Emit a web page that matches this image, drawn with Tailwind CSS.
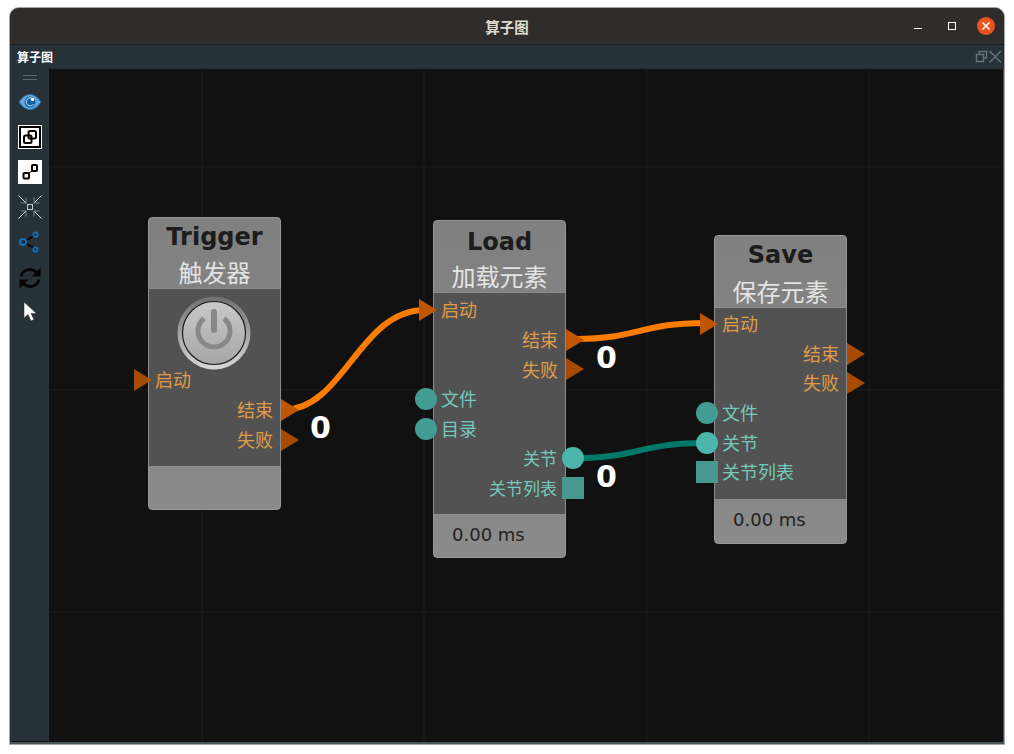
<!DOCTYPE html>
<html><head><meta charset="utf-8"><script src="https://cdn.jsdelivr.net/npm/@tailwindcss/browser@4"></script></head>
<body class="m-0 bg-white">
<div class="w-[1014px] h-[754px] overflow-hidden bg-white pl-[9px] pt-[7px] font-['DejaVu_Sans','Noto_Sans_CJK_SC',sans-serif]">
<div class="w-[996px] h-[738px] flex flex-col rounded-t-[10px] overflow-hidden border border-[#a3a7a9] bg-[#263238]">
  <div class="relative h-[37px] shrink-0 pt-[1px] bg-[#2f2d2c] border-b border-[#1c1c1c] flex items-center justify-center">
    <span class="text-[14.500px] font-bold text-[#dfdbd2] font-['Noto_Sans_CJK_SC',sans-serif]">算子图</span>
    <svg class="absolute left-[900px] top-[0px]" width="94" height="36" viewBox="0 0 94 36">
      <path d="M4 20.500H12" stroke="#fff" stroke-width="1"/>
      <rect x="38.500" y="14.500" width="7" height="7" fill="none" stroke="#fff" stroke-width="1"/>
      <circle cx="76" cy="18" r="9" fill="#e95420"/>
      <path d="M72.500 14.500L79.500 21.500M79.500 14.500L72.500 21.500" stroke="#fff" stroke-width="1.500"/>
    </svg>
  </div>
  <div class="relative h-[24px] shrink-0 flex items-center pl-[7px] bg-[#263238]">
    <span class="text-[12px] font-bold text-white font-['Noto_Sans_CJK_SC',sans-serif]">算子图</span>
    <svg class="absolute left-[965px] top-[5px]" width="27" height="14" viewBox="0 0 27 14">
      <path d="M4 3.500V1.500H11.500V8H8.500M1.500 4.500H8.500V11.500H1.500Z" fill="none" stroke="#66747a" stroke-width="1.400"/>
      <path d="M14.500 1L26 12.500M26 1L14.500 12.500" stroke="#66747a" stroke-width="1.500"/>
    </svg>
  </div>
  <div class="flex flex-1 min-h-0 pr-[1px] pb-[2px] bg-[#4a5558]">
    <div class="w-[39px] shrink-0 flex flex-col items-center bg-[#263238]">
      <div class="h-[5px] w-[14px] mt-[6px] border-y-[1.500px] border-[#5b686d]"></div>
      <svg class="mt-[13px]" width="24" height="18" viewBox="0 0 24 18"><path d="M1 9C5 3 9 1.500 12 1.500S19 3 23 9C19 15 15 16.500 12 16.500S5 15 1 9Z" fill="#64a9dc" stroke="#2a6ea8" stroke-width="1"/><circle cx="12" cy="9" r="5.500" fill="#0d5fa5"/><path d="M15 6A4 4 0 1 0 15.500 11" fill="none" stroke="#cfe4f5" stroke-width="1"/><circle cx="14.500" cy="6.500" r="1.800" fill="#fff"/></svg>
      <svg class="mt-[14px]" width="24" height="24" viewBox="0 0 24 24"><rect width="24" height="24" fill="#fff"/><rect x="2" y="2" width="20" height="20" fill="none" stroke="#000" stroke-width="2"/><rect x="10.500" y="6" width="7.500" height="7.500" rx="1.500" fill="none" stroke="#000" stroke-width="2"/><rect x="6" y="10.500" width="7.500" height="7.500" rx="1.500" fill="none" stroke="#000" stroke-width="2"/></svg>
      <svg class="mt-[11px]" width="24" height="24" viewBox="0 0 24 24"><rect width="24" height="24" fill="#fff"/><rect x="5.500" y="13" width="5.500" height="5.500" rx="1" fill="none" stroke="#000" stroke-width="2"/><rect x="14" y="5" width="5" height="6" rx="1" fill="none" stroke="#000" stroke-width="2"/><path d="M11 13L14 11" stroke="#000"/></svg>
      <svg class="mt-[11px]" width="24" height="24" viewBox="0 0 24 24" fill="none"><path d="M2.500 8H8V2.500M21.500 8H16V2.500M2.500 16H8V21.500M21.500 16H16V21.500" stroke="#5c6a70" stroke-width="1.600"/><rect x="9.500" y="9.500" width="5" height="5" stroke="#c5cbce" stroke-width="1"/><path d="M0.500 0.500L7.500 7.500M23.500 0.500L16.500 7.500M0.500 23.500L7.500 16.500M23.500 23.500L16.500 16.500" stroke="#eef1f2" stroke-width="0.900"/></svg>
      <svg class="mt-[12px]" width="22" height="22" viewBox="0 0 22 22" fill="none"><path d="M5 11L16 4M5 11L16 18" stroke="#000" stroke-width="1.500"/><circle cx="4" cy="11" r="3" stroke="#0a72c4" stroke-width="2"/><circle cx="16.500" cy="3.500" r="2.200" stroke="#0a72c4" stroke-width="1.800"/><circle cx="16.500" cy="18.500" r="2.200" stroke="#0a72c4" stroke-width="1.800"/></svg>
      <svg class="mt-[14px]" width="22" height="22" viewBox="0 0 22 22" fill="none"><path d="M2 9.500A9 9 0 0 1 17 5L19 7" stroke="#050505" stroke-width="3"/><path d="M21.500 0.500V9.500H12.500Z" fill="#050505"/><path d="M20 12.500A9 9 0 0 1 5 17L3 15" stroke="#050505" stroke-width="3"/><path d="M0.500 21.500V12.500H9.500Z" fill="#050505"/></svg>
      <svg class="mt-[13px]" width="14" height="20" viewBox="0 0 14 20"><path d="M1 0V16L5 12.500L8 19L11 17.500L8 11.500H13.500Z" fill="#fff" stroke="#222" stroke-width="0.500"/></svg>
      <div class="mt-auto h-[1px] w-[36px] bg-[#111]"></div>
    </div>
    <div class="relative flex-1 h-full bg-[#111111] overflow-hidden">
      <svg class="absolute left-0 top-0" width="953" height="674" viewBox="0 1 953 674" fill="none">
        <path d="M153 0V674M375 0V674M598 0V674M820 0V674M0 99H953M0 322H953M0 544H953" stroke="#1c1c1c" stroke-width="1"/>
        <path d="M234 342C295 342 310 242 376 242" stroke="#fb7c00" stroke-width="6"/>
        <path d="M526 271C590 271 590 255 656 255" stroke="#fb7c00" stroke-width="6"/>
        <path d="M526 390C590 390 590 375 657 375" stroke="#00796b" stroke-width="6"/>
      </svg>
      <div class="absolute left-[261px] top-[340px] text-[30px] leading-[38px] font-bold text-white">0</div>
      <div class="absolute left-[547px] top-[270px] text-[30px] leading-[38px] font-bold text-white">0</div>
      <div class="absolute left-[547px] top-[389px] text-[30px] leading-[38px] font-bold text-white">0</div>

      <!-- Trigger -->
      <div class="absolute left-[99px] top-[148px] w-[133px] h-[293px] flex flex-col rounded-[4px] border border-[#979797] bg-linear-to-b from-[#808080] to-[#8a8a8a]">
        <div class="h-[70px] shrink-0 flex flex-col items-center">
          <div class="text-[24px] leading-[38px] font-bold text-[#1c1c1c]">Trigger</div>
          <div class="text-[24px] leading-[32px] text-[#e4e4e4] font-['Noto_Sans_CJK_SC',sans-serif]">触发器</div>
        </div>
        <div class="-mx-px h-[179px] shrink-0 bg-[#525252] border-[1.500px] border-[#8c8c8c] flex flex-col">
          <div class="h-[76px] shrink-0 flex items-center justify-center pt-[11px] pr-[1px]">
            <svg width="74" height="74" viewBox="0 0 74 74" fill="none">
              <defs>
                <linearGradient id="ring" x1="0" y1="0" x2="0" y2="1"><stop offset="0" stop-color="#6f6f6f"/><stop offset="1" stop-color="#d8d8d8"/></linearGradient>
                <linearGradient id="face" x1="0" y1="0" x2="0" y2="1"><stop offset="0" stop-color="#c9c9c9"/><stop offset="1" stop-color="#a6a6a6"/></linearGradient>
              </defs>
              <circle cx="37" cy="37" r="36.500" fill="url(#ring)"/>
              <circle cx="37" cy="37" r="31.500" fill="url(#face)" stroke="#1e1e1e" stroke-width="1.200"/>
              <path d="M27 22.500A16 16 0 1 0 47 22.500" stroke="#888" stroke-width="5"/>
              <path d="M37 16V34" stroke="#888" stroke-width="6" stroke-linecap="round"/>
            </svg>
          </div>
          <div class="relative h-[30px] flex items-center pl-[6px] pb-[2px] text-[18px] text-[#e09b48] font-['Noto_Sans_CJK_SC',sans-serif]">
            <svg class="absolute left-[-15px] top-[4px]" width="19" height="22" viewBox="0 0 19 22"><path d="M0 0L18 11L0 22Z" fill="#bf5600" fill-opacity=".85"/></svg>启动</div>
          <div class="relative h-[30px] flex items-center justify-end pr-[7px] pb-[2px] text-[18px] text-[#e09b48] font-['Noto_Sans_CJK_SC',sans-serif]">结束
            <svg class="absolute left-[132px] top-[4px]" width="19" height="22" viewBox="0 0 19 22"><path d="M0 0L18 11L0 22Z" fill="#bf5600"/></svg></div>
          <div class="relative h-[30px] flex items-center justify-end pr-[7px] pb-[2px] text-[18px] text-[#e09b48] font-['Noto_Sans_CJK_SC',sans-serif]">失败
            <svg class="absolute left-[132px] top-[4px]" width="19" height="22" viewBox="0 0 19 22"><path d="M0 0L18 11L0 22Z" fill="#a84b00"/></svg></div>
        </div>
      </div>

      <!-- Load -->
      <div class="absolute left-[384px] top-[151px] w-[133px] h-[338px] flex flex-col rounded-[4px] border border-[#979797] bg-linear-to-b from-[#808080] to-[#8a8a8a]">
        <div class="h-[71px] shrink-0 flex flex-col items-center">
          <div class="text-[24px] leading-[42px] font-bold text-[#1c1c1c]">Load</div>
          <div class="text-[24px] leading-[26px] text-[#e4e4e4] font-['Noto_Sans_CJK_SC',sans-serif]">加载元素</div>
        </div>
        <div class="-mx-px h-[223px] shrink-0 pt-[2px] bg-[#525252] border border-[#8c8c8c] flex flex-col text-[18px] font-['Noto_Sans_CJK_SC',sans-serif]">
          <div class="relative h-[29.700px] flex items-center pl-[7px] text-[#e09b48]"><svg class="absolute left-[-15px] top-[4px]" width="19" height="22" viewBox="0 0 19 22"><path d="M0 0L18 11L0 22Z" fill="#bf5600"/></svg>启动</div>
          <div class="relative h-[29.700px] flex items-center justify-end pr-[7px] pb-[1px] text-[#e09b48]">结束<svg class="absolute left-[132px] top-[4px]" width="19" height="22" viewBox="0 0 19 22"><path d="M0 0L18 11L0 22Z" fill="#bf5600"/></svg></div>
          <div class="relative h-[29.700px] flex items-center justify-end pr-[7px] text-[#e09b48]">失败<svg class="absolute left-[132px] top-[4px]" width="19" height="22" viewBox="0 0 19 22"><path d="M0 0L18 11L0 22Z" fill="#a84b00"/></svg></div>
          <div class="relative h-[29.700px] flex items-center pl-[7px] pb-[1px] text-[#74cbbb]"><span class="absolute left-[-19px] top-[4px] size-[22px] rounded-full bg-[#439c93]"></span>文件</div>
          <div class="relative h-[29.700px] flex items-center pl-[7px] pb-[1px] text-[#74cbbb]"><span class="absolute left-[-19px] top-[4px] size-[22px] rounded-full bg-[#439c93]"></span>目录</div>
          <div class="relative h-[29.700px] flex items-center justify-end pr-[8px] pb-[1px] text-[17px] text-[#74cbbb]">关节<span class="absolute left-[128px] top-[4px] size-[22px] rounded-full bg-[#4db6ac]"></span></div>
          <div class="relative h-[29.700px] flex items-center justify-end pr-[8px] pb-[1px] text-[17px] text-[#74cbbb]">关节列表<span class="absolute left-[128px] top-[4px] size-[22px] bg-[#47978f]"></span></div>
        </div>
        <div class="flex-1 flex items-center pl-[18px] pb-[4px] text-[18px] text-[#222222]">0.00 ms</div>
      </div>

      <!-- Save -->
      <div class="absolute left-[665px] top-[166px] w-[133px] h-[309px] flex flex-col rounded-[4px] border border-[#979797] bg-linear-to-b from-[#808080] to-[#8a8a8a]">
        <div class="h-[71px] shrink-0 flex flex-col items-center">
          <div class="text-[24px] leading-[39px] font-bold text-[#1c1c1c]">Save</div>
          <div class="text-[24px] leading-[32px] text-[#e4e4e4] font-['Noto_Sans_CJK_SC',sans-serif]">保存元素</div>
        </div>
        <div class="-mx-px h-[193px] shrink-0 pt-[1px] bg-[#525252] border border-[#8c8c8c] flex flex-col text-[18px] font-['Noto_Sans_CJK_SC',sans-serif]">
          <div class="relative h-[29.700px] flex items-center pl-[7px] pb-[1px] text-[#e09b48]"><svg class="absolute left-[-15px] top-[4px]" width="19" height="22" viewBox="0 0 19 22"><path d="M0 0L18 11L0 22Z" fill="#bf5600"/></svg>启动</div>
          <div class="relative h-[29.700px] flex items-center justify-end pr-[7px] pb-[1px] text-[#e09b48]">结束<svg class="absolute left-[132px] top-[4px]" width="19" height="22" viewBox="0 0 19 22"><path d="M0 0L18 11L0 22Z" fill="#a84b00"/></svg></div>
          <div class="relative h-[29.700px] flex items-center justify-end pr-[7px] pb-[1px] text-[#e09b48]">失败<svg class="absolute left-[132px] top-[4px]" width="19" height="22" viewBox="0 0 19 22"><path d="M0 0L18 11L0 22Z" fill="#a84b00"/></svg></div>
          <div class="relative h-[29.700px] flex items-center pl-[7px] text-[#74cbbb]"><span class="absolute left-[-19px] top-[4px] size-[22px] rounded-full bg-[#439c93]"></span>文件</div>
          <div class="relative h-[29.700px] flex items-center pl-[7px] pb-[1px] text-[#74cbbb]"><span class="absolute left-[-19px] top-[4px] size-[22px] rounded-full bg-[#4db6ac]"></span>关节</div>
          <div class="relative h-[29.700px] flex items-center pl-[7px] pb-[2px] text-[#74cbbb]"><span class="absolute left-[-19px] top-[4px] size-[22px] bg-[#47978f]"></span>关节列表</div>
        </div>
        <div class="flex-1 flex items-center pl-[18px] pb-[5px] text-[18px] text-[#222222]">0.00 ms</div>
      </div>
    </div>
  </div>
</div>
</div>
</body></html>
